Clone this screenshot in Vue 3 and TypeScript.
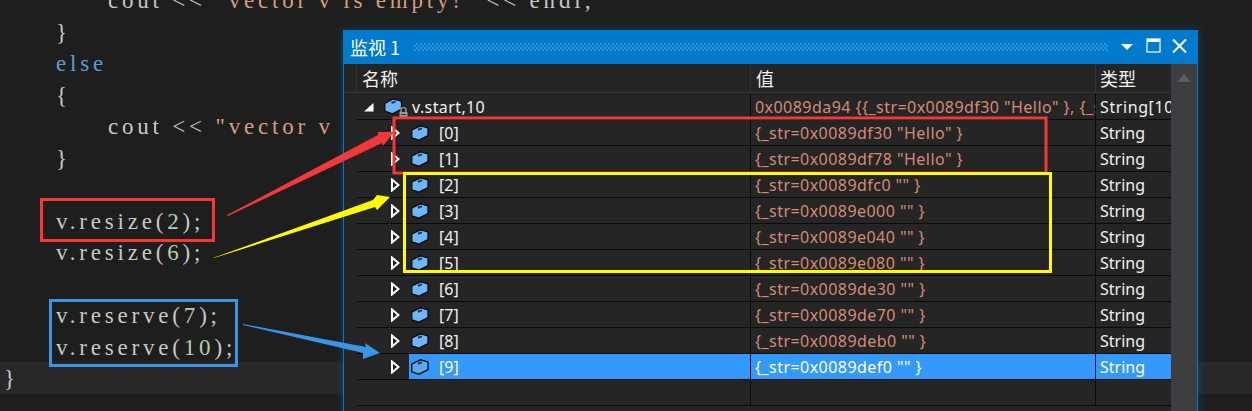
<script setup lang="ts">
interface Part { text: string; kind: string }
interface Line { indent: number; parts: Part[]; current?: boolean }
interface Row { label: string; value: string; selected?: boolean }

const p = (text: string, kind = 'plain'): Part => ({ text, kind })

const lines: Line[] = [
  { indent: 4, parts: [p('cout << '), p('"vector v is empty!"', 'str'), p(' << endl;')] },
  { indent: 0, parts: [p('}')] },
  { indent: 0, parts: [p('else', 'kw')] },
  { indent: 0, parts: [p('{')] },
  { indent: 4, parts: [p('cout << '), p('"vector v is not empty!"', 'str'), p(' << endl;')] },
  { indent: 0, parts: [p('}')] },
  { indent: 0, parts: [] },
  { indent: 0, parts: [p('v.resize('), p('2', 'num'), p(');')] },
  { indent: 0, parts: [p('v.resize('), p('6', 'num'), p(');')] },
  { indent: 0, parts: [] },
  { indent: 0, parts: [p('v.reserve('), p('7', 'num'), p(');')] },
  { indent: 0, parts: [p('v.reserve('), p('10', 'num'), p(');')] },
  { indent: -4, parts: [p('}')], current: true }
]

const rows: Row[] = [
  { label: '[0]', value: '{_str=0x0089df30 "Hello" }' },
  { label: '[1]', value: '{_str=0x0089df78 "Hello" }' },
  { label: '[2]', value: '{_str=0x0089dfc0 "" }' },
  { label: '[3]', value: '{_str=0x0089e000 "" }' },
  { label: '[4]', value: '{_str=0x0089e040 "" }' },
  { label: '[5]', value: '{_str=0x0089e080 "" }' },
  { label: '[6]', value: '{_str=0x0089de30 "" }' },
  { label: '[7]', value: '{_str=0x0089de70 "" }' },
  { label: '[8]', value: '{_str=0x0089deb0 "" }' },
  { label: '[9]', value: '{_str=0x0089def0 "" }', selected: true }
]
</script>

<template>
  <div class="page">
    <div class="code">
      <div v-for="(line, i) in lines" :key="i" class="line" :class="{ current: line.current }">
        <span class="indent" :class="'i' + (line.indent + 4)"></span><span
          v-for="(part, j) in line.parts" :key="j" :class="part.kind">{{ part.text }}</span>
      </div>
    </div>

    <section class="watch">
      <header class="title">
        <span class="title-text">监视 1</span>
        <span class="grip"></span>
        <svg class="tbtn" width="76" height="20" viewBox="0 0 76 20">
          <polygon points="0,6 12,6 6,12" fill="#fff" />
          <rect x="26" y="1" width="13" height="13" fill="none" stroke="#fff" stroke-width="1.2" />
          <rect x="26" y="1" width="13" height="3" fill="#fff" />
          <path d="M52 1.5 L65 14.5 M65 1.5 L52 14.5" stroke="#fff" stroke-width="2" fill="none" />
        </svg>
      </header>
      <div class="body">
        <div class="table">
          <div class="head">
            <div class="h-gutter"></div>
            <div class="h-cell name">名称</div>
            <div class="h-cell value">值</div>
            <div class="h-cell type">类型</div>
          </div>
          <div class="tree">
            <div class="row">
              <div class="cell name">
                <span class="toggle root">
                  <svg width="10" height="9" viewBox="0 0 10 9"><polygon points="9.5,0 9.5,8.5 0,8.5" fill="#fff" /></svg>
                </span>
                <span class="content root-content">
                  <span class="icon-wrap">
                    <svg class="cube" width="19" height="17" viewBox="0 0 19 17">
                      <path d="M0.8 5.5 L9.5 0.8 L17.5 3.5 L17.5 11 L8.5 15.8 L0.8 13 Z" fill="#6db6fc" stroke="#0c0c0c" stroke-width="1.3" />
                      <path d="M7.5 5 L11.5 3.5" stroke="#1c3a57" stroke-width="2" />
                    </svg>
                    <svg class="lock" width="9" height="13" viewBox="0 0 9 13">
                      <path d="M2 6 V3.5 C2 1 7 1 7 3.5 V6" fill="none" stroke="#a0a0a0" stroke-width="1.3" />
                      <rect x="0.5" y="6" width="8" height="6" fill="#9a9a9a" />
                      <rect x="2" y="8" width="5" height="1" fill="#333" />
                    </svg>
                  </span>
                  <span class="label root-label">v.start,10</span>
                </span>
              </div>
              <div class="cell value val-text">0x0089da94 {{ '{{' }}_str=0x0089df30 "Hello" }, {_str=0x0089df78 "Hello" }, {_str=0x0089dfc0 "" }}</div>
              <div class="cell type root-type">String[10]</div>
            </div>
            <div v-for="row in rows" :key="row.label" class="row" :class="{ selected: row.selected }">
              <div class="cell name">
                <span class="toggle">
                  <svg width="9" height="14" viewBox="0 0 9 14"><polygon points="1,1.5 7.5,7 1,12.5" fill="none" stroke="#fff" stroke-width="2" /></svg>
                </span>
                <span class="content">
                  <svg class="cube" width="18" height="16" viewBox="0 0 18 16">
                    <path d="M0.8 5 L9.5 0.8 L17 3 L17 10.5 L8 15.2 L0.8 12.8 Z" :fill="row.selected ? '#5ca8ee' : '#6db6fc'" stroke="#0c0c0c" stroke-width="1.3" />
                    <path d="M7 4.8 L11 3.4" stroke="#1c3a57" stroke-width="2" />
                  </svg>
                  <span class="label">{{ row.label }}</span>
                </span>
              </div>
              <div class="cell value val-text">{{ row.value }}</div>
              <div class="cell type">String</div>
            </div>
            <div class="row empty">
              <div class="cell name"></div>
              <div class="cell value"></div>
              <div class="cell type"></div>
            </div>
          </div>
        </div>
        <aside class="scroll">
          <svg width="14" height="8" viewBox="0 0 14 8"><polygon points="7,0 14,8 0,8" fill="#5b5b60" /></svg>
        </aside>
      </div>
    </section>

    <svg class="marks" width="1252" height="411" viewBox="0 0 1252 411">
      <rect x="41.5" y="199.5" width="172" height="41" fill="none" stroke="#f43838" stroke-width="3" />
      <rect x="50.5" y="300.5" width="186" height="65" fill="none" stroke="#3a96e4" stroke-width="3" />
      <rect x="394" y="118" width="652" height="55" fill="none" stroke="#f43838" stroke-width="3" />
      <rect x="404.5" y="173.5" width="646" height="98" fill="none" stroke="#ffff00" stroke-width="3" />
      <polygon points="227,215 378,135 378,132 394,132 383,146 382,143 228,216" fill="#f43838" />
      <polygon points="213,258 373,200 377,195 390,197 377,210 375,207 214,258" fill="#ffff00" />
      <polygon points="243,324 366,347 365,343 380,353 363,359 363,353 243,325" fill="#3a96e4" />
    </svg>
  </div>
</template>

<style>
html, body { margin: 0; background: #1e1e1e; }
</style>

<style scoped>
.page {
  position: relative;
  width: 1252px;
  height: 411px;
  overflow: hidden;
  background: #1e1e1e;
}
.code {
  margin-top: -16px;
  font-family: "Liberation Serif", serif;
  font-size: 23px;
  letter-spacing: 3.8px;
  line-height: 33px;
  color: #c8c8c8;
  white-space: pre;
}
.line { height: 31.5px; padding-left: 56px; }
.line.current { padding-left: 4px; background: #282828; }
.indent { display: inline-block; width: 0; }
.indent.i8 { width: 52px; }
.kw { color: #569cd6; }
.str { color: #d69d85; }
.num { color: #b5cea8; }

.watch {
  position: absolute;
  left: 343px;
  top: 30px;
  width: 855px;
  height: 400px;
  box-sizing: border-box;
  border: 1px solid #007acc;
  border-top: 0;
  background: #252526;
  box-shadow: 0 0 9px rgba(0, 122, 204, 0.35);
  display: flex;
  flex-direction: column;
  font-family: "Noto Sans", "Noto Sans CJK SC", sans-serif;
  font-size: 16px;
  color: #f1f1f1;
}
.title {
  height: 34px;
  flex: none;
  background: #007acc;
  display: flex;
  align-items: center;
  color: #fff;
}
.title-text {
  font-family: "Noto Sans CJK SC", sans-serif;
  font-size: 18px;
  padding-left: 6px;
  width: 64px;
  flex: none;
  white-space: pre;
}
.grip {
  width: 694px;
  height: 8px;
  flex: none;
  background: repeating-conic-gradient(#2f92d6 0 25%, transparent 0 50%) 0 0 / 4px 4px;
}
.tbtn { margin-left: 13px; flex: none; margin-top: 1px; }

.body { display: flex; flex: 1; min-height: 0; }
.table { width: 827px; flex: none; display: flex; flex-direction: column; }
.head {
  height: 28px;
  display: flex;
  border-bottom: 1px solid #333337;
  font-family: "Noto Sans CJK SC", sans-serif;
  font-size: 18px;
  margin-bottom: 1px;
}
.h-gutter { width: 12px; flex: none; border-right: 1px solid #333337; }
.h-cell {
  box-sizing: border-box;
  display: flex;
  align-items: center;
  border-right: 1px solid #333337;
  padding-left: 5px;
}
.h-cell.type { border-right: 0; padding-left: 4px; }
.tree { padding-left: 13px; }
.row { display: flex; height: 26px; }
.cell {
  box-sizing: border-box;
  height: 26px;
  border-bottom: 1px solid #0a0a0a;
  border-right: 1px solid #0a0a0a;
  display: flex;
  align-items: center;
  overflow: hidden;
  white-space: pre;
  padding-top: 1px;
}
.name { width: 394px; flex: none; }
.value { width: 345px; flex: none; }
.type { width: 75px; flex: none; border-right: 0; }
.cell.value { padding-left: 4px; }
.cell.type { padding-left: 4px; }
.val-text { color: #d68a75; letter-spacing: 0.45px; }
.root-type { letter-spacing: 0.6px; }
.cell.name { padding: 0; }
.toggle {
  width: 52px;
  flex: none;
  padding-left: 34px;
  box-sizing: border-box;
  display: flex;
  align-items: center;
}
.toggle.root { width: 26px; padding-left: 7px; padding-top: 2px; }
.content {
  flex: 1;
  height: 100%;
  display: flex;
  align-items: center;
  padding-left: 2px;
}
.root-content { padding-left: 1px; }
.icon-wrap { position: relative; display: flex; }
.lock { position: absolute; left: 15px; top: 8px; }
.label { padding-left: 10px; }
.root-label { padding-left: 9px; letter-spacing: 0.4px; }
.selected .content,
.selected .cell.value,
.selected .cell.type {
  background: #3399ff;
  color: #fff;
}
.scroll {
  width: 26px;
  flex: none;
  background: #3e3e42;
  display: flex;
  justify-content: center;
  align-items: flex-start;
  padding-top: 10px;
  box-sizing: border-box;
}
.marks { position: absolute; left: 0; top: 0; pointer-events: none; }
</style>
